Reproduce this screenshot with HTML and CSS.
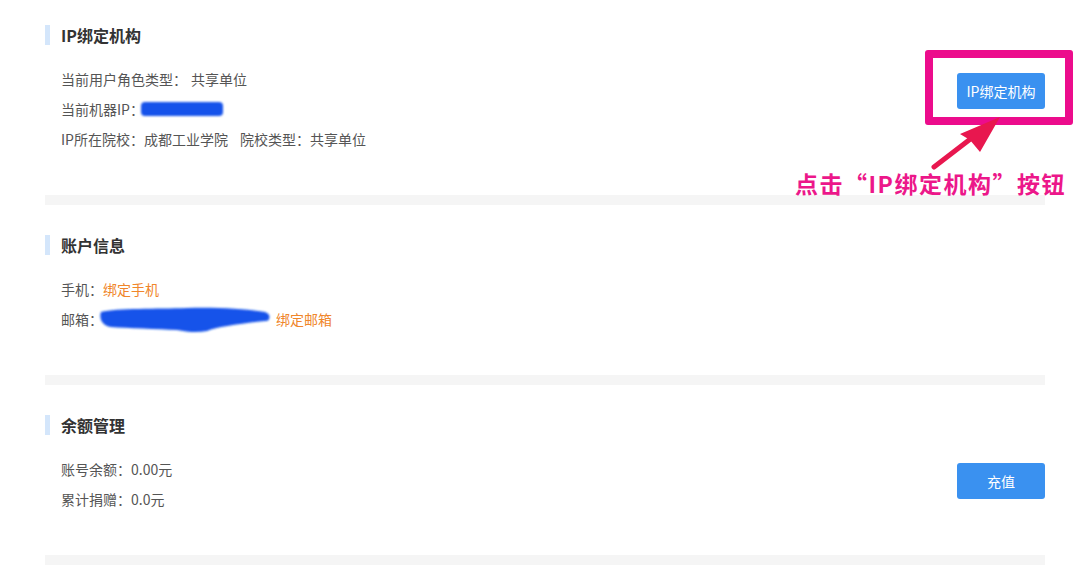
FILE: index.html
```html
<!DOCTYPE html>
<html lang="zh-CN">
<head>
<meta charset="utf-8">
<title>账户设置</title>
<link rel="stylesheet" href="styles.css">
</head>
<body>
<div class="page">
  <section class="section">
    <h2 class="sec-title"><span class="bar"></span>IP绑定机构</h2>
    <div class="sec-body">
      <div class="rows">
        <div class="row">当前用户角色类型：<span class="gap-s"></span>共享单位</div>
        <div class="row">当前机器IP：<span class="scribble-ip"></span></div>
        <div class="row">IP所在院校：成都工业学院<span class="gap-l"></span>院校类型：共享单位</div>
      </div>
      <button class="btn">IP绑定机构</button>
    </div>
  </section>
  <div class="sep"></div>

  <section class="section">
    <h2 class="sec-title"><span class="bar"></span>账户信息</h2>
    <div class="sec-body">
      <div class="rows">
        <div class="row">手机：<a class="link">绑定手机</a></div>
        <div class="row">邮箱：<svg class="scribble-mail" width="176" height="30" viewBox="0 0 176 30"><defs><filter id="bl" x="-10%" y="-40%" width="120%" height="180%"><feGaussianBlur stdDeviation="1.2"/></filter></defs><path filter="url(#bl)" fill="#1552ea" d="M4 8 C20 4 60 5 90 4 C120 3 150 5 168 8 C174 10 174 16 168 17 C140 20 120 23 110 27 C100 29 90 28 80 26 C60 25 30 24 14 23 C4 22 2 13 4 8 Z"/><circle cx="170" cy="15" r="2" fill="#1552ea" opacity="0.4" filter="url(#bl)"/></svg><a class="link link-mail">绑定邮箱</a></div>
      </div>
    </div>
  </section>
  <div class="sep"></div>

  <section class="section">
    <h2 class="sec-title"><span class="bar"></span>余额管理</h2>
    <div class="sec-body">
      <div class="rows">
        <div class="row">账号余额：0.00元</div>
        <div class="row">累计捐赠：0.0元</div>
      </div>
      <button class="btn">充值</button>
    </div>
  </section>
  <div class="sep"></div>
</div>

<div class="annot-box"></div>
<svg class="annot-arrow" width="90" height="70" viewBox="0 0 90 70">
  <line x1="12" y1="57" x2="64" y2="17" stroke="#e8174f" stroke-width="5" stroke-linecap="round"/>
  <polygon points="78,7 38,24 48,30 58,42" fill="#e8174f"/>
</svg>
<div class="annot-text">点击“IP绑定机构”按钮</div>
</body>
</html>
```

FILE: styles.css
```css
* { box-sizing: border-box; }
html, body { margin: 0; padding: 0; background: #fff; }
body {
  font-family: "Microsoft YaHei", "Noto Sans CJK SC", "Noto Sans", sans-serif;
  color: #555;
  font-size: 14px;
}
.page {
  width: 1000px;
  margin-left: 45px;
  padding-top: 25px;
}
.section { padding-bottom: 41px; }
.sep + .section { padding-top: 30px; }
.sec-title {
  display: flex;
  align-items: center;
  height: 20px;
  margin: 0;
  font-size: 16px;
  font-weight: bold;
  color: #333;
  line-height: 20px;
}
.bar {
  width: 5px;
  height: 20px;
  background: #d4e6fb;
  margin-right: 11px;
}
.sec-body {
  display: flex;
  justify-content: space-between;
  align-items: flex-start;
  margin-top: 19px;
  padding-left: 16px;
}
.row {
  height: 30px;
  line-height: 30px;
  display: flex;
  align-items: center;
  white-space: nowrap;
}
.gap-s { display: inline-block; width: 4px; }
.gap-l { display: inline-block; width: 12px; }
.link { color: #f0862b; cursor: pointer; }
.link-mail { margin-left: 3px; }
.scribble-ip {
  display: inline-block;
  width: 82px;
  height: 14px;
  margin-left: -3px;
  background: #1552ea;
  border-radius: 4px;
  filter: blur(1px);
}
.scribble-mail { display: block; margin-left: -6px; }
.btn {
  margin-top: 9px;
  width: 88px;
  height: 36px;
  border: 0;
  border-radius: 3px;
  background: #3a91f0;
  color: #fff;
  font-family: inherit;
  font-size: 14px;
  padding: 0;
}
.sep {
  height: 10px;
  background: #f5f5f5;
}
.annot-box {
  position: absolute;
  left: 925px;
  top: 50px;
  width: 148px;
  height: 75px;
  border: 8px solid #ec0c8c;
  border-radius: 3px;
}
.annot-arrow {
  position: absolute;
  left: 922px;
  top: 110px;
}
.annot-text {
  position: absolute;
  left: 795px;
  top: 167px;
  font-size: 23px;
  line-height: 32px;
  font-weight: bold;
  color: #ec178a;
  letter-spacing: 1.5px;
  white-space: nowrap;
}
```
